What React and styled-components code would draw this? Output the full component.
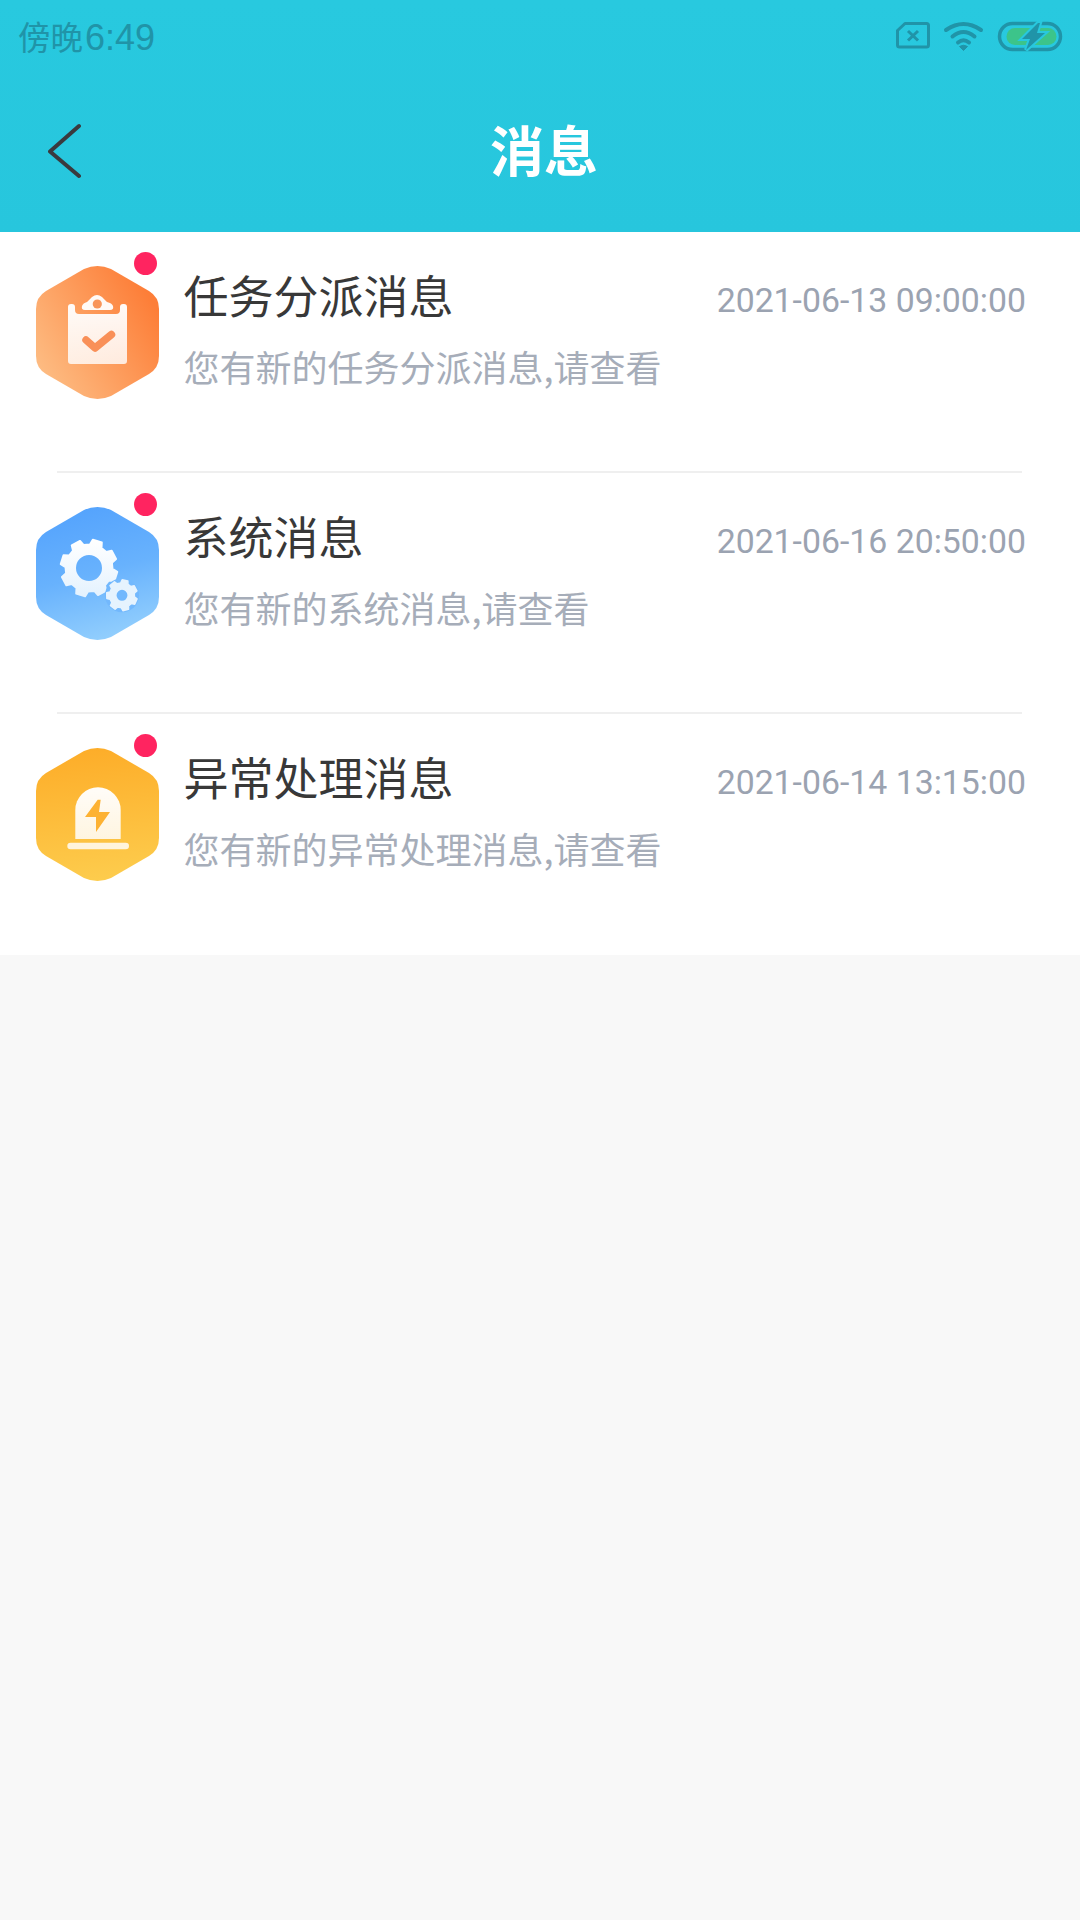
import React from "react";
import styled, { createGlobalStyle } from "styled-components";

const Global = createGlobalStyle`
  html, body { margin: 0; padding: 0; background: #f8f8f8; }
  body { font-family: "Noto Sans CJK SC", "Noto Sans", sans-serif; }
`;

const Page = styled.div`
  width: 1080px;
  height: 1920px;
  background: #f8f8f8;
  overflow: hidden;
`;

const Header = styled.header`
  height: 232px;
  background: linear-gradient(180deg, #28c9df 0%, #27c6dd 100%);
  display: flex;
  flex-direction: column;
`;

const StatusBar = styled.div`
  height: 75px;
  box-sizing: border-box;
  padding: 0 17px 0 18px;
  display: flex;
  align-items: center;
  justify-content: space-between;
  color: #2094a8;
`;

const Clock = styled.div`
  font-size: 32.5px;
  line-height: 71px;
  height: 75px;
  display: flex;
  align-items: baseline;
`;

const ClockDigits = styled.span`
  font-family: "Liberation Sans", sans-serif;
  font-size: 36px;
  margin-left: 2px;
`;

const StatusIcons = styled.div`
  display: flex;
  align-items: center;
  height: 75px;
  box-sizing: border-box;
  padding-bottom: 5px;
`;

const Nav = styled.div`
  flex: 1;
  display: grid;
  grid-template-columns: 1fr auto 1fr;
  align-items: center;
  padding: 0 40px 6px 48px;
`;

const BackButton = styled.div`
  display: flex;
  align-items: center;
  height: 60px;
`;

const NavTitle = styled.h1`
  margin: -3px 0 0;
  color: #fff;
  font-size: 54px;
  line-height: 70px;
  font-weight: 700;
`;

const List = styled.main`
  background: #fff;
  padding-bottom: 2px;
`;

const Row = styled.section`
  position: relative;
  height: 239px;
  box-sizing: border-box;
  padding: 34px 54px 0 36px;
  display: flex;
  align-items: flex-start;
`;

const IconBox = styled.div`
  width: 123px;
  height: 133px;
  flex: none;
  margin-right: 24.5px;
`;

const Dot = styled.span`
  position: absolute;
  left: 134px;
  top: 20px;
  width: 23px;
  height: 23px;
  border-radius: 50%;
  background: #ff2460;
`;

const Body = styled.div`
  flex: 1;
  min-width: 0;
  margin-top: 2px;
  display: flex;
  flex-direction: column;
`;

const TopLine = styled.div`
  display: flex;
  justify-content: space-between;
  align-items: center;
  height: 54px;
`;

const Title = styled.h2`
  margin: 0;
  font-size: 45px;
  line-height: 54px;
  font-weight: 400;
  color: #383838;
`;

const Time = styled.time`
  font-family: Roboto, sans-serif;
  font-size: 33.8px;
  line-height: 54px;
  color: #9ba3b1;
  position: relative;
  top: 6px;
`;

const Sub = styled.p`
  margin: 19px 0 0;
  font-size: 36px;
  line-height: 50px;
  color: #a6adb9;
`;

const Divider = styled.div`
  height: 2px;
  margin: 0 58px 0 57px;
  background: #efefef;
`;

const HEX =
  "M48 3Q61.5-3 75 3L113 25Q123 31 123 43L123 90Q123 102 113 108L75 130Q61.5 136 48 130L10 108Q0 102 0 90L0 43Q0 31 10 25Z";

function gearPath(cx, cy, R, r, hole, teeth, rot) {
  const step = (Math.PI * 2) / teeth;
  const pts = [];
  for (let i = 0; i < teeth; i++) {
    const a = i * step - Math.PI / 2 + rot;
    const w1 = step * 0.33;
    const w2 = step * 0.21;
    [
      [a - w1, r],
      [a - w2, R],
      [a + w2, R],
      [a + w1, r],
    ].forEach(([t, d]) => pts.push([cx + d * Math.cos(t), cy + d * Math.sin(t)]));
  }
  const outer = "M" + pts.map((p) => p[0].toFixed(2) + " " + p[1].toFixed(2)).join("L") + "Z";
  const inner = `M${cx - hole} ${cy}a${hole} ${hole} 0 1 0 ${hole * 2} 0a${hole} ${hole} 0 1 0 ${-hole * 2} 0Z`;
  return outer + inner;
}

const TaskIcon = () => (
  <svg width="123" height="133" viewBox="0 0 123 133">
    <defs>
      <linearGradient id="ob" x1="0" y1="1" x2="1" y2="0.35">
        <stop offset="0" stopColor="#fdc48c" />
        <stop offset="1" stopColor="#fd7e38" />
      </linearGradient>
      <linearGradient id="ow" x1="0" y1="0" x2="0" y2="1">
        <stop offset="0" stopColor="#fff" stopOpacity="0.96" />
        <stop offset="1" stopColor="#fff" stopOpacity="0.8" />
      </linearGradient>
    </defs>
    <path d={HEX} fill="url(#ob)" />
    <path
      d="M35 38h1q3 0 3 3v3q0 4 4 4h37q4 0 4-4v-3q0-3 3-3h1q3 0 3 3v54q0 3-3 3H35q-3 0-3-3V41q0-3 3-3Z"
      fill="url(#ow)"
    />
    <path
      d="M49 44Q45 44 46 40Q47 37 51 36L56 31Q61 27 66 31L71 36Q76 37 77 40Q78 44 74 44Z"
      fill="#fff"
      fillOpacity="0.95"
    />
    <circle cx="61.3" cy="38" r="4.6" fill="#f8955a" />
    <path
      d="M50 74L59 82L75.5 68.5"
      fill="none"
      stroke="#f99058"
      strokeWidth="7.5"
      strokeLinecap="round"
      strokeLinejoin="round"
    />
  </svg>
);

const GearIcon = () => (
  <svg width="123" height="133" viewBox="0 0 123 133">
    <defs>
      <linearGradient id="bb" x1="0.35" y1="0" x2="0.6" y2="1">
        <stop offset="0" stopColor="#54a3fd" />
        <stop offset="0.5" stopColor="#68b2fd" />
        <stop offset="1" stopColor="#93cffd" />
      </linearGradient>
      <linearGradient id="bw" x1="0" y1="0" x2="0" y2="1">
        <stop offset="0" stopColor="#fff" />
        <stop offset="1" stopColor="#e4f2fe" />
      </linearGradient>
    </defs>
    <path d={HEX} fill="url(#bb)" />
    <path
      d={gearPath(53, 61, 28.5, 23.5, 14, 8, 0.3)}
      fill="url(#bw)"
      stroke="url(#bw)"
      strokeWidth="2"
      strokeLinejoin="round"
      fillRule="evenodd"
    />
    <circle cx="86" cy="88.3" r="17" fill="#72b8fd" />
    <path
      d={gearPath(86, 88.3, 15.5, 12.5, 6.2, 7, 0.2)}
      fill="#e6f3fe"
      stroke="#e6f3fe"
      strokeWidth="1.5"
      strokeLinejoin="round"
      fillRule="evenodd"
    />
  </svg>
);

const AlarmIcon = () => (
  <svg width="123" height="133" viewBox="0 0 123 133">
    <defs>
      <linearGradient id="yb" x1="0.45" y1="0" x2="0.55" y2="1">
        <stop offset="0" stopColor="#fdad29" />
        <stop offset="1" stopColor="#fdcc4d" />
      </linearGradient>
      <linearGradient id="yw" x1="0" y1="0" x2="0" y2="1">
        <stop offset="0" stopColor="#fff" stopOpacity="0.97" />
        <stop offset="1" stopColor="#fff" stopOpacity="0.84" />
      </linearGradient>
    </defs>
    <path d={HEX} fill="url(#yb)" />
    <path d="M39.3 91V62a22.7 22.7 0 0 1 45.4 0V91Z" fill="url(#yw)" />
    <rect x="31.3" y="94.7" width="61.7" height="6.6" rx="3.3" fill="#fff" fillOpacity="0.82" />
    <path d="M61.7 51.7L49 69H60V84L74 64H63L64.7 51.7Z" fill="#fdb233" />
  </svg>
);

const SimIcon = () => (
  <svg width="34" height="40" viewBox="0 0 34 40">
    <path
      d="M9 8.500H30.500q2 0 2 2V30q0 2-2 2H3.500q-2 0-2-2V15.500Z"
      fill="none"
      stroke="#2094a8"
      strokeWidth="3"
      strokeLinejoin="round"
    />
    <path d="M12 16L22 25.500M22 16L12 25.500" stroke="#2094a8" strokeWidth="3" fill="none" />
  </svg>
);

const WifiIcon = () => (
  <svg width="42" height="40" viewBox="0 0 42 40" style={{ marginLeft: 13 }}>
    <g transform="translate(0 2)">
      <g fill="none" stroke="#2094a8" strokeWidth="4" strokeLinecap="round">
        <path d="M3 13Q20.5 1 38 13" />
        <path d="M9.500 19.500Q20.500 10.500 31.500 19.500" />
        <path d="M15 25.500Q20.500 21 26 25.500" />
      </g>
      <path d="M20.500 33.500L16.500 29.500Q20.500 27 24.500 29.500Z" fill="#2094a8" stroke="#2094a8" strokeLinejoin="round" />
    </g>
  </svg>
);

const BatteryIcon = () => (
  <svg width="66" height="40" viewBox="0 0 66 40" style={{ marginLeft: 12 }}>
    <rect x="2.500" y="8.500" width="61" height="26" rx="13" fill="none" stroke="#2094a8" strokeWidth="3.500" />
    <rect x="9.500" y="13" width="50" height="17" rx="8.500" fill="#3cc48a" />
    <path
      d="M41 8L25 24H33L29 35L48 18H40L43 8Z"
      fill="#2094a8"
      stroke="#28c8de"
      strokeWidth="4"
      strokeLinejoin="miter"
      paintOrder="stroke"
    />
  </svg>
);

const messages = [
  { icon: <TaskIcon />, title: "任务分派消息", time: "2021-06-13 09:00:00", sub: "您有新的任务分派消息,请查看" },
  { icon: <GearIcon />, title: "系统消息", time: "2021-06-16 20:50:00", sub: "您有新的系统消息,请查看" },
  { icon: <AlarmIcon />, title: "异常处理消息", time: "2021-06-14 13:15:00", sub: "您有新的异常处理消息,请查看" },
];

export default function App() {
  return (
    <Page>
      <Global />
      <Header>
        <StatusBar>
          <Clock>
            傍晚<ClockDigits>6:49</ClockDigits>
          </Clock>
          <StatusIcons>
            <SimIcon />
            <WifiIcon />
            <BatteryIcon />
          </StatusIcons>
        </StatusBar>
        <Nav>
          <BackButton>
            <svg width="34" height="56" viewBox="0 0 34 56">
              <path
                d="M31 3L2 28.500L31 53"
                fill="none"
                stroke="#3a3a3e"
                strokeWidth="4"
                strokeLinecap="round"
                strokeLinejoin="round"
              />
            </svg>
          </BackButton>
          <NavTitle>消息</NavTitle>
          <span />
        </Nav>
      </Header>
      <List>
        {messages.map((m, i) => (
          <React.Fragment key={m.time}>
            <Row>
              <IconBox>{m.icon}</IconBox>
              <Dot />
              <Body>
                <TopLine>
                  <Title>{m.title}</Title>
                  <Time>{m.time}</Time>
                </TopLine>
                <Sub>{m.sub}</Sub>
              </Body>
            </Row>
            {i < messages.length - 1 && <Divider />}
          </React.Fragment>
        ))}
      </List>
    </Page>
  );
}
